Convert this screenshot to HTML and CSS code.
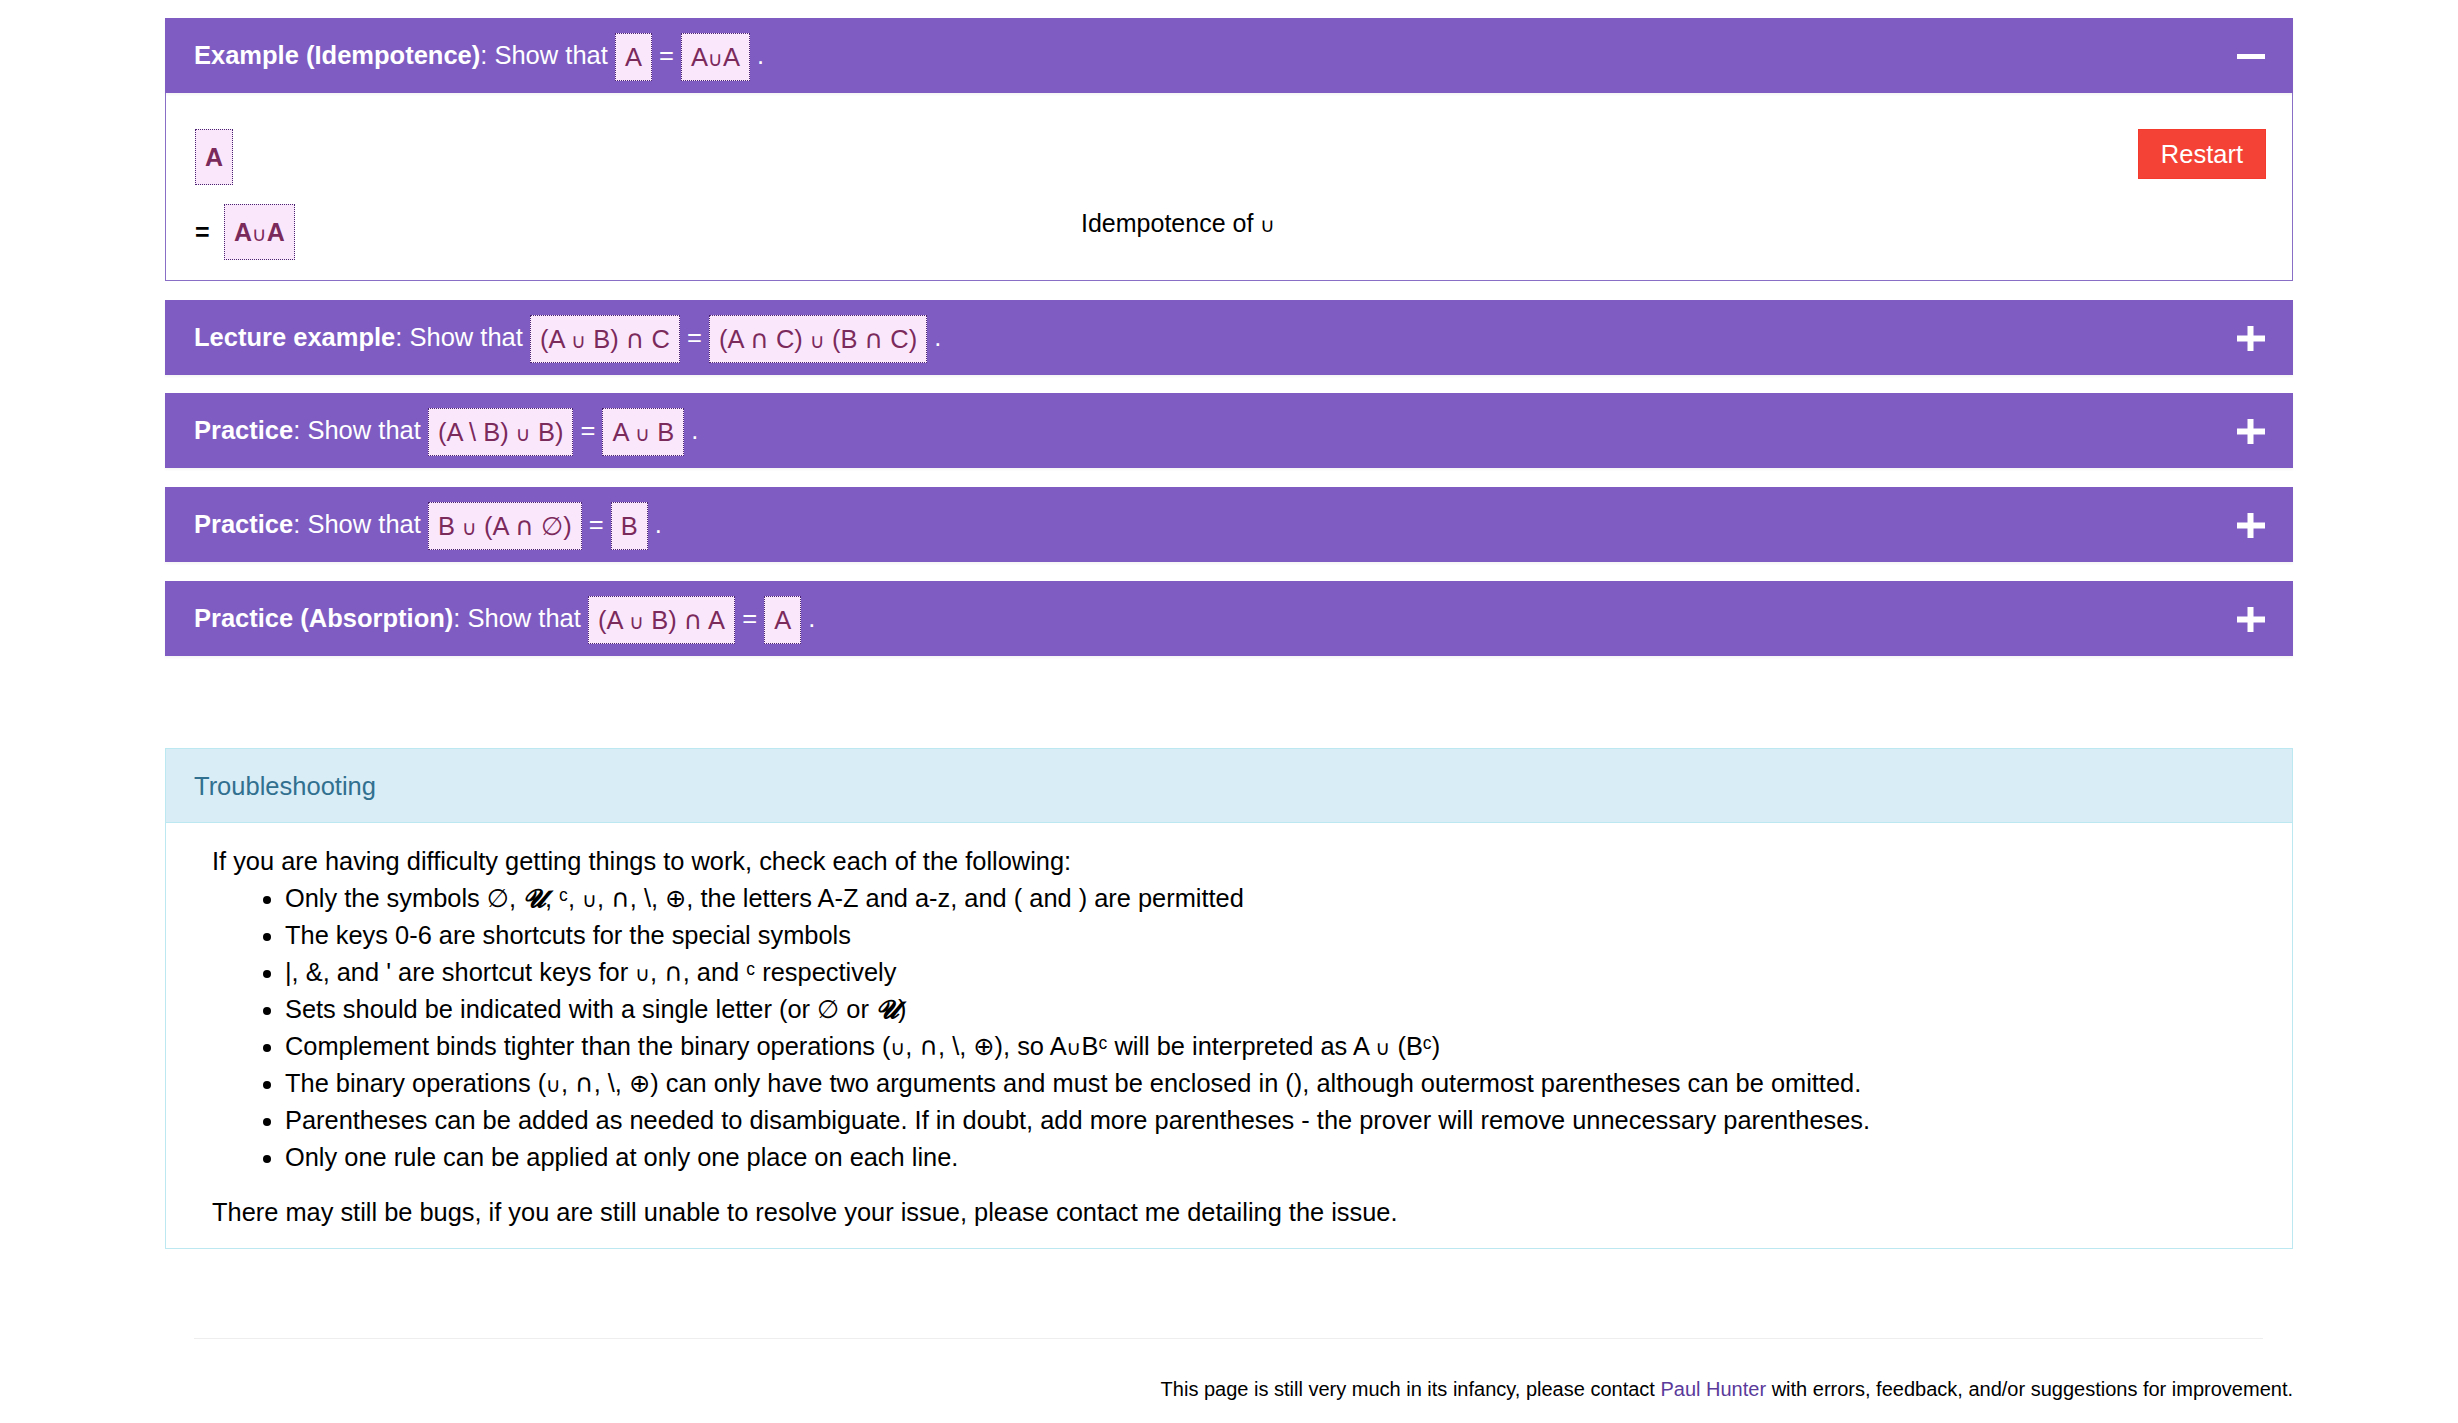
FILE: index.html
```html
<!DOCTYPE html>
<html lang="en">
<head>
<meta charset="utf-8">
<title>Set theory prover</title>
<link rel="stylesheet" href="styles.css">
</head>
<body>
<div class="page">
  <section class="panel">
    <header class="panel-head">
      <div class="title"><b>Example (Idempotence)</b>: Show that <span class="m">A</span> = <span class="m">A<span class="cu">∪</span>A</span> .</div>
      <svg class="toggle" width="28" height="28" viewBox="0 0 28 28"><rect x="0" y="11" width="28" height="5" fill="#fff"/></svg>
    </header>
    <div class="panel-body proof">
      <div class="expr"><span class="mb">A</span></div>
      <div class="just"></div>
      <div class="act"><button class="restart">Restart</button></div>
      <div class="expr"><span class="eq">=</span><span class="mb">A<span class="cu">∪</span>A</span></div>
      <div class="just">Idempotence of <span class="cu">∪</span></div>
      <div class="act"></div>
    </div>
  </section>

  <section class="panel">
    <header class="panel-head">
      <div class="title"><b>Lecture example</b>: Show that <span class="m">(A <span class="cu">∪</span> B) <span class="ca">∩</span> C</span> = <span class="m">(A <span class="ca">∩</span> C) <span class="cu">∪</span> (B <span class="ca">∩</span> C)</span> .</div>
      <svg class="toggle" width="28" height="28" viewBox="0 0 28 28"><rect x="0" y="10.5" width="28" height="6" fill="#fff"/><rect x="10.5" y="1" width="6" height="25" fill="#fff"/></svg>
    </header>
  </section>

  <section class="panel">
    <header class="panel-head">
      <div class="title"><b>Practice</b>: Show that <span class="m">(A \ B) <span class="cu">∪</span> B)</span> = <span class="m">A <span class="cu">∪</span> B</span> .</div>
      <svg class="toggle" width="28" height="28" viewBox="0 0 28 28"><rect x="0" y="10.5" width="28" height="6" fill="#fff"/><rect x="10.5" y="1" width="6" height="25" fill="#fff"/></svg>
    </header>
  </section>

  <section class="panel">
    <header class="panel-head">
      <div class="title"><b>Practice</b>: Show that <span class="m">B <span class="cu">∪</span> (A <span class="ca">∩</span> ∅)</span> = <span class="m">B</span> .</div>
      <svg class="toggle" width="28" height="28" viewBox="0 0 28 28"><rect x="0" y="10.5" width="28" height="6" fill="#fff"/><rect x="10.5" y="1" width="6" height="25" fill="#fff"/></svg>
    </header>
  </section>

  <section class="panel">
    <header class="panel-head">
      <div class="title"><b>Practice (Absorption)</b>: Show that <span class="m">(A <span class="cu">∪</span> B) <span class="ca">∩</span> A</span> = <span class="m">A</span> .</div>
      <svg class="toggle" width="28" height="28" viewBox="0 0 28 28"><rect x="0" y="10.5" width="28" height="6" fill="#fff"/><rect x="10.5" y="1" width="6" height="25" fill="#fff"/></svg>
    </header>
  </section>

  <section class="info">
    <div class="info-head">Troubleshooting</div>
    <div class="info-body">
      <p>If you are having difficulty getting things to work, check each of the following:</p>
      <ul>
        <li>Only the symbols ∅, <span class="uni">𝓤</span>, ᶜ, <span class="cu">∪</span>, <span class="ca">∩</span>, \, ⊕, the letters A-Z and a-z, and ( and ) are permitted</li>
        <li>The keys 0-6 are shortcuts for the special symbols</li>
        <li>|, &amp;, and ' are shortcut keys for <span class="cu">∪</span>, <span class="ca">∩</span>, and ᶜ respectively</li>
        <li>Sets should be indicated with a single letter (or ∅ or <span class="uni">𝓤</span>)</li>
        <li>Complement binds tighter than the binary operations (<span class="cu">∪</span>, <span class="ca">∩</span>, \, ⊕), so A<span class="cu">∪</span>Bᶜ will be interpreted as A <span class="cu">∪</span> (Bᶜ)</li>
        <li>The binary operations (<span class="cu">∪</span>, <span class="ca">∩</span>, \, ⊕) can only have two arguments and must be enclosed in (), although outermost parentheses can be omitted.</li>
        <li>Parentheses can be added as needed to disambiguate. If in doubt, add more parentheses - the prover will remove unnecessary parentheses.</li>
        <li>Only one rule can be applied at only one place on each line.</li>
      </ul>
      <p>There may still be bugs, if you are still unable to resolve your issue, please contact me detailing the issue.</p>
    </div>
  </section>

  <hr class="rule">
  <footer class="foot">This page is still very much in its infancy, please contact <a href="#">Paul Hunter</a> with errors, feedback, and/or suggestions for improvement.</footer>
</div>
</body>
</html>
```

FILE: styles.css
```css
html, body {
  margin: 0;
  padding: 0;
  background: #fff;
}
body {
  font-family: "Liberation Sans", Arial, "DejaVu Sans", sans-serif;
  color: #000;
}
.page {
  width: 2128px;
  margin: 0 auto;
  padding-top: 18px;
}
.panel {
  margin-bottom: 18.7px;
}
.panel-head {
  height: 75px;
  box-sizing: border-box;
  background: #7e5cc2;
  color: #fff;
  display: flex;
  align-items: center;
  justify-content: space-between;
  padding: 3px 28px 0 29px;
  font-size: 25.5px;
  box-shadow: 0 2px 2px rgba(0, 0, 0, 0.04);
}
.title b {
  font-weight: bold;
}
.cu {
  font-family: "DejaVu Sans", sans-serif;
  font-size: 0.8em;
  font-weight: normal;
  line-height: 0;
}
.ca {
  font-family: "DejaVu Sans", sans-serif;
  font-weight: normal;
  line-height: 0;
}
.m {
  display: inline-block;
  background: #fbe7fc;
  color: #7b2a5c;
  border: 1px dotted #4a2370;
  padding: 8px 9px;
  line-height: 30px;
  box-sizing: border-box;
  height: 48px;
  font-size: 25.5px;
  vertical-align: middle;
}
.toggle {
  display: block;
}
.panel-body {
  border: 1px solid #8a6fc6;
  border-top: none;
}
.proof {
  display: grid;
  grid-template-columns: 886px 1fr auto;
  row-gap: 19px;
  align-items: center;
  padding: 36px 26px 20px 29px;
}
.expr {
  display: flex;
  align-items: center;
}
.eq {
  font-weight: bold;
  font-size: 25px;
  width: 29px;
}
.mb {
  display: inline-block;
  background: #fbe7fc;
  color: #7b2a5c;
  border: 1px dotted #4a2370;
  padding: 12px 9px;
  line-height: 30px;
  height: 56px;
  box-sizing: border-box;
  font-size: 25px;
  font-weight: bold;
}
.just {
  font-size: 25px;
  line-height: 30px;
  padding-bottom: 18px;
}
.act {
  align-self: start;
}
.restart {
  background: #f44336;
  color: #fff;
  border: 1px solid #f33a2c;
  font-family: "Liberation Sans", Arial, sans-serif;
  font-size: 25.5px;
  height: 50px;
  padding: 0 22px;
  cursor: pointer;
}
.info {
  margin-top: 92.5px;
  border: 1px solid #bce8f1;
}
.info-head {
  background: #d9edf7;
  color: #31708f;
  height: 74px;
  box-sizing: border-box;
  border-bottom: 1px solid #bce8f1;
  display: flex;
  align-items: center;
  padding-left: 28px;
  padding-top: 2px;
  font-size: 25.5px;
}
.info-body {
  padding: 20px 29px 17px 46px;
  font-size: 25.4px;
  line-height: 36.9px;
}
.info-body p {
  margin: 0;
}
.info-body ul {
  margin: 0 0 19px;
  padding-left: 73px;
}
.uni {
  font-family: "DejaVu Serif", serif;
  font-weight: bold;
  font-style: italic;
  line-height: 0;
}
.rule {
  border: none;
  border-top: 1px solid #eee;
  margin: 89px 30px 0 29px;
}
.foot {
  text-align: right;
  font-size: 20px;
  line-height: 28px;
  margin-top: 36px;
  padding-bottom: 20px;
}
.foot a {
  color: #5a3a9a;
  text-decoration: none;
}
```
